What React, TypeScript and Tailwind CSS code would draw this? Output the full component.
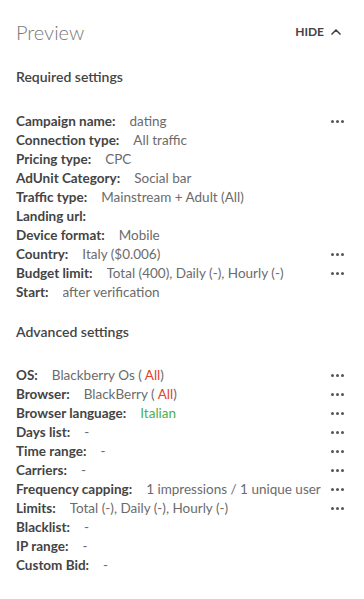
import { ChevronUp } from 'lucide-react'

type Row = {
  label: string
  value?: React.ReactNode
  more?: boolean
}

const required: Row[] = [
  { label: 'Campaign name:', value: 'dating', more: true },
  { label: 'Connection type:', value: 'All traffic' },
  { label: 'Pricing type:', value: 'CPC' },
  { label: 'AdUnit Category:', value: 'Social bar' },
  { label: 'Traffic type:', value: 'Mainstream + Adult (All)' },
  { label: 'Landing url:' },
  { label: 'Device format:', value: 'Mobile' },
  { label: 'Country:', value: 'Italy ($0.006)', more: true },
  { label: 'Budget limit:', value: 'Total (400), Daily (-), Hourly (-)', more: true },
  { label: 'Start:', value: 'after verification' },
]

const advanced: Row[] = [
  {
    label: 'OS:',
    value: (
      <>
        Blackberry Os ( <span className="text-[#e0452b]">All</span>)
      </>
    ),
    more: true,
  },
  {
    label: 'Browser:',
    value: (
      <>
        BlackBerry ( <span className="text-[#e0452b]">All</span>)
      </>
    ),
    more: true,
  },
  { label: 'Browser language:', value: <span className="text-[#4caf50]">Italian</span>, more: true },
  { label: 'Days list:', value: '-', more: true },
  { label: 'Time range:', value: '-', more: true },
  { label: 'Carriers:', value: '-', more: true },
  { label: 'Frequency capping:', value: '1 impressions / 1 unique user', more: true },
  { label: 'Limits:', value: 'Total (-), Daily (-), Hourly (-)', more: true },
  { label: 'Blacklist:', value: '-' },
  { label: 'IP range:', value: '-' },
  { label: 'Custom Bid:', value: '-' },
]

function Dots() {
  return (
    <div className="flex shrink-0 items-center gap-[2px] pl-1">
      <span className="h-[3px] w-[3px] rounded-full bg-[#555]" />
      <span className="h-[3px] w-[3px] rounded-full bg-[#555]" />
      <span className="h-[3px] w-[3px] rounded-full bg-[#555]" />
    </div>
  )
}

function Rows({ rows }: { rows: Row[] }) {
  return (
    <div className="flex flex-col">
      {rows.map((r) => (
        <div key={r.label} className="flex h-[19px] items-center text-[13.5px]">
          <span className="shrink-0 font-bold text-[#444]">{r.label}</span>
          <span className="ml-[14px] min-w-0 flex-1 overflow-hidden whitespace-nowrap text-[#6b6b6b]">
            {r.value}
          </span>
          {r.more && <Dots />}
        </div>
      ))}
    </div>
  )
}

export default function App() {
  return (
    <div
      className="h-[599px] w-[364px] bg-white pl-4 pr-5 text-[#444]"
      style={{ fontFamily: 'Lato, "Open Sans", sans-serif' }}
    >
      <div className="flex items-center justify-between pt-[17px]">
        <h1 className="text-[20px] font-light text-[#777]">Preview</h1>
        <button type="button" className="flex items-center gap-1 text-[12px] font-bold text-[#444]">
          HIDE
          <ChevronUp className="h-4 w-4" strokeWidth={2.5} />
        </button>
      </div>

      <h2 className="mt-[19px] text-[14px] font-semibold text-[#444]">Required settings</h2>
      <div className="mt-[25px]">
        <Rows rows={required} />
      </div>

      <h2 className="mt-[19px] text-[14px] font-semibold text-[#444]">Advanced settings</h2>
      <div className="mt-[24px]">
        <Rows rows={advanced} />
      </div>
    </div>
  )
}
